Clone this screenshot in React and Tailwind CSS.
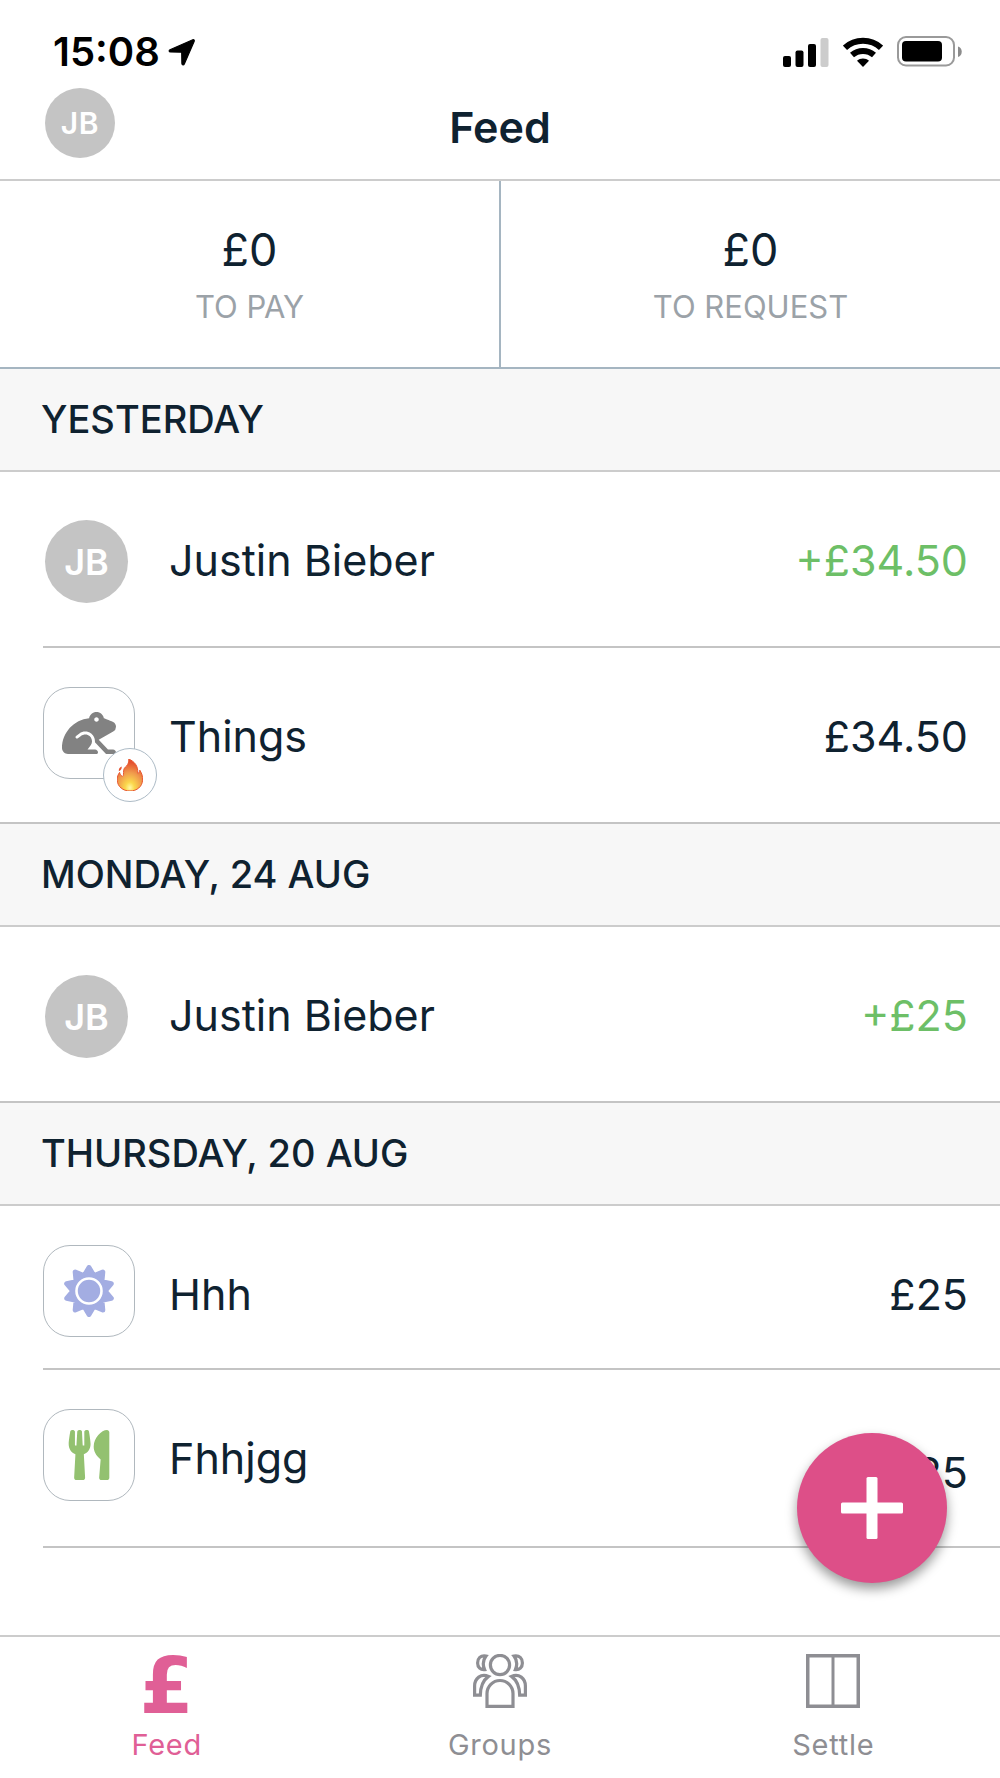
import React from 'react'
import { FaFrog, FaUtensils } from 'react-icons/fa'

const sections = [
    {
        title: 'YESTERDAY',
        items: [
            { id: 1, name: 'Justin Bieber', amount: '+£34.50', initials: 'JB', incoming: true },
            { id: 2, name: 'Things', amount: '£34.50', icon: 'frog', badge: true }
        ]
    },
    {
        title: 'MONDAY, 24 AUG',
        items: [{ id: 3, name: 'Justin Bieber', amount: '+£25', initials: 'JB', incoming: true }]
    },
    {
        title: 'THURSDAY, 20 AUG',
        items: [
            { id: 4, name: 'Hhh', amount: '£25', icon: 'sun', height: 'h-[164px]' },
            {
                id: 5,
                name: 'Fhhjgg',
                amount: '£25',
                icon: 'food',
                height: 'h-[178px]',
                amountClass: 'mt-[14px]'
            }
        ]
    }
]

function StatusBar() {
    return (
        <div className="flex items-center justify-between h-[88px] pt-[15px] pl-[53px] pr-[38px] text-black">
            <div className="flex items-center gap-2">
                <span className="text-[40px] leading-[48px] font-semibold">15:08</span>
                <svg width="28" height="28" viewBox="0 0 28 28" aria-hidden="true">
                    <path
                        d="M24.800 1.800 2 11.700c-1.300.6-1 2.300.4 2.300l11.300.2.200 11.400c0 1.400 1.800 1.700 2.400.4L26.200 3.200c.4-1-.4-1.800-1.400-1.400z"
                        fill="currentColor"
                        stroke="currentColor"
                        strokeWidth="1.200"
                        strokeLinejoin="round"
                    />
                </svg>
            </div>
            <div className="flex items-center gap-[14px]">
                <svg width="46" height="30" viewBox="0 0 46 30" aria-hidden="true">
                    <rect x="0" y="19" width="8" height="11" rx="2" />
                    <rect x="12.500" y="13.500" width="8" height="16.500" rx="2" />
                    <rect x="25" y="7" width="8" height="23" rx="2" />
                    <rect x="37.500" y="1" width="8" height="29" rx="2" fill="#cccccc" />
                </svg>
                <svg width="40" height="30" viewBox="0 0 40 30" aria-hidden="true">
                    <g fill="none" stroke="currentColor" strokeWidth="6">
                        <path d="M2 10.800C12 1.500 28 1.500 38 10.800" />
                        <path d="M9 18C15.200 12.500 24.800 12.500 31 18" />
                    </g>
                    <path d="M20 30l-6-6.200c3.400-3 8.600-3 12 0z" fill="currentColor" />
                </svg>
                <svg width="65" height="31" viewBox="0 0 65 31" aria-hidden="true">
                    <rect x="1" y="1" width="56" height="28.500" rx="8" fill="none" stroke="#9a9a9a" strokeWidth="2" />
                    <rect x="5" y="5" width="40" height="20.500" rx="4" />
                    <path d="M61 10.500c5 1.500 5 9 0 10.500z" fill="#8c8c8c" />
                </svg>
            </div>
        </div>
    )
}

function SunIcon() {
    const points = []
    for (let i = 0; i < 20; i++) {
        const r = i % 2 === 0 ? 23.500 : 16
        const a = (i * 18 - 90) * (Math.PI / 180)
        points.push((26 + r * Math.cos(a)).toFixed(1) + ',' + (26 + r * Math.sin(a)).toFixed(1))
    }
    return (
        <svg width="52" height="52" viewBox="0 0 52 52" aria-hidden="true">
            <polygon points={points.join(' ')} fill="#a3ade2" stroke="#a3ade2" strokeWidth="5" strokeLinejoin="round" />
            <circle cx="26" cy="26" r="12.500" fill="none" stroke="#fff" strokeWidth="2.600" />
        </svg>
    )
}

function FlameIcon() {
    return (
        <svg width="26" height="32" viewBox="0 0 26 32" aria-hidden="true">
            <defs>
                <radialGradient id="flame" cx="0.5" cy="0.900" r="0.800">
                    <stop offset="0" stopColor="#fff9a8" />
                    <stop offset="0.220" stopColor="#fbd84c" />
                    <stop offset="0.600" stopColor="#f09a4c" />
                    <stop offset="1" stopColor="#e5502f" />
                </radialGradient>
            </defs>
            <path
                d="M11.800 0c5.600 2.600 9.400 6.600 9 14.400 1.300-.4 2-1.600 2-3.200 2.200 3.400 3 6.200 2.800 10C25.200 27.600 20 32 13 32S.6 27.800.2 21.200c-.2-3 .8-5.600 2.400-7.800.4 2 1.200 3.200 2.800 4 1.600-.8 1-3.200 1.200-5.600.2-2.200 1.200-3.400 2.800-4.600C11.200 5.200 12 3 11.800 0z"
                fill="url(#flame)"
                stroke="#e8562f"
                strokeWidth="1"
            />
            <path d="M4.800 7.600c-2.200.8-3.200 2.400-3 4.600 2-.6 3-2.200 3-4.600z" fill="#e5502f" />
        </svg>
    )
}

function Avatar({ item }) {
    if (item.initials) {
        return (
            <span className="flex items-center justify-center size-[83px] ml-[2px] mt-[9px] rounded-full bg-[#c4c4c4] text-[36px] font-semibold text-white">
                {item.initials}
            </span>
        )
    }

    return (
        <span className="relative flex items-center justify-center size-[92px] rounded-[27px] border border-[#b0b8be] bg-white">
            {item.icon === 'frog' && <FaFrog size={54} color="#828282" />}
            {item.icon === 'sun' && <SunIcon />}
            {item.icon === 'food' && <FaUtensils size={50} color="#93c170" />}
            {item.badge && (
                <span className="absolute left-[59px] top-[60px] flex items-center justify-center size-[54px] rounded-full border border-[#adbbc6] bg-white">
                    <FlameIcon />
                </span>
            )}
        </span>
    )
}

function FeedRow({ item, last }) {
    return (
        <li
            className={
                'flex items-start pt-[39px] pr-8 ' +
                (last ? 'h-[174px]' : (item.height || 'h-[176px]') + ' border-b-2 border-[#c4c4c4]')
            }
        >
            <span className="w-[92px] shrink-0">
                <Avatar item={item} />
            </span>
            <span className="ml-[34px] flex-1 text-[43px] leading-[98px]">{item.name}</span>
            <span
                className={
                    'text-[43px] leading-[98px] ' +
                    (item.incoming ? 'text-[#6dbf67] ' : '') +
                    (item.amountClass || '')
                }
            >
                {item.amount}
            </span>
        </li>
    )
}

function Stat({ value, label }) {
    return (
        <div className="flex-1 flex flex-col items-center pt-[39px] h-[186px]">
            <span className="text-[45px] leading-[60px]">{value}</span>
            <span className="text-[31px] leading-[54px] text-[#9ba2a8]">{label}</span>
        </div>
    )
}

function GroupsIcon() {
    return (
        <svg width="54" height="54" viewBox="0 0 54 54" fill="none" stroke="currentColor" strokeWidth="3.200" aria-hidden="true">
            <circle cx="27" cy="11" r="9.600" />
            <path d="M14 52.300V39.500a13 13 0 0 1 26 0v12.800z" />
            <path d="M13 2C7.500 1 4.600 4.500 4.600 9s3 7 7 6.600C9.600 11 10 6 13 2z" />
            <path d="M41 2C46.500 1 49.400 4.500 49.400 9s-3 7-7 6.600C44.400 11 44 6 41 2z" />
            <path d="M15.500 22.400C8 19 1.600 24.500 1.600 32v9.200H7.300c.2-8.500 2.200-14.500 8.200-18.800z" />
            <path d="M38.500 22.400C46 19 52.400 24.500 52.400 32v9.200H46.700c-.2-8.500-2.200-14.500-8.200-18.800z" />
        </svg>
    )
}

function SettleIcon() {
    return (
        <svg width="54" height="54" viewBox="0 0 54 54" fill="none" stroke="currentColor" strokeWidth="3.500" aria-hidden="true">
            <rect x="1.750" y="1.750" width="50.500" height="50.500" />
            <path d="M27 2v50" strokeWidth="3" />
        </svg>
    )
}

function Tab({ label, active, children }) {
    return (
        <button
            type="button"
            className={'flex-1 flex flex-col items-center pt-[17px] ' + (active ? 'text-[#e05f96]' : 'text-[#8e8e93]')}
        >
            <span className="flex items-start justify-center h-[56px]">{children}</span>
            <span className="mt-4 text-[29px] leading-[38px] tracking-wide">{label}</span>
        </button>
    )
}

export default function App() {
    return (
        <div className="flex flex-col min-h-screen bg-white text-[#0f2230] font-['Inter','Liberation_Sans',sans-serif]">
            <StatusBar />
            <header className="grid grid-cols-3 items-start h-[93px] px-[45px] border-b-2 border-[#cccccc]">
                <button
                    type="button"
                    className="size-[70px] rounded-full bg-[#c4c4c4] text-[30px] font-semibold tracking-wide text-white"
                >
                    JB
                </button>
                <h1 className="text-center text-[43px] leading-[79px] font-semibold">Feed</h1>
            </header>

            <main className="relative flex-1">
                <div className="flex border-b-2 border-[#a5b5c1] divide-x-2 divide-[#a5b5c1]">
                    <Stat value="£0" label="TO PAY" />
                    <Stat value="£0" label="TO REQUEST" />
                </div>

                {sections.map((section, i) => (
                    <section key={section.title}>
                        <h2 className="px-[41px] text-[38px] leading-[101px] font-medium bg-[#f7f7f7] border-b-2 border-[#cccccc]">
                            {section.title}
                        </h2>
                        <ul
                            className={
                                'pl-[43px] ' + (i < sections.length - 1 ? 'border-b-2 border-[#c4c4c4]' : '')
                            }
                        >
                            {section.items.map((item, j) => (
                                <FeedRow
                                    key={item.id}
                                    item={item}
                                    last={i < sections.length - 1 && j === section.items.length - 1}
                                />
                            ))}
                        </ul>
                    </section>
                ))}

                <button
                    type="button"
                    aria-label="Add"
                    className="absolute right-[53px] bottom-[52px] flex items-center justify-center size-[150px] rounded-full bg-[#dd4f88] shadow-[0_6px_12px_rgba(0,0,0,0.4)]"
                >
                    <svg width="62" height="62" viewBox="0 0 62 62" fill="#fff" aria-hidden="true">
                        <rect x="25.500" y="0" width="11" height="62" rx="1.500" />
                        <rect x="0" y="25.500" width="62" height="11" rx="1.500" />
                    </svg>
                </button>
            </main>

            <nav className="flex h-[143px] border-t-2 border-[#cccccc]">
                <Tab label="Feed" active>
                    <span className="font-['DejaVu_Sans',sans-serif] text-[78px] leading-[64px] font-bold">£</span>
                </Tab>
                <Tab label="Groups">
                    <GroupsIcon />
                </Tab>
                <Tab label="Settle">
                    <SettleIcon />
                </Tab>
            </nav>
        </div>
    )
}
